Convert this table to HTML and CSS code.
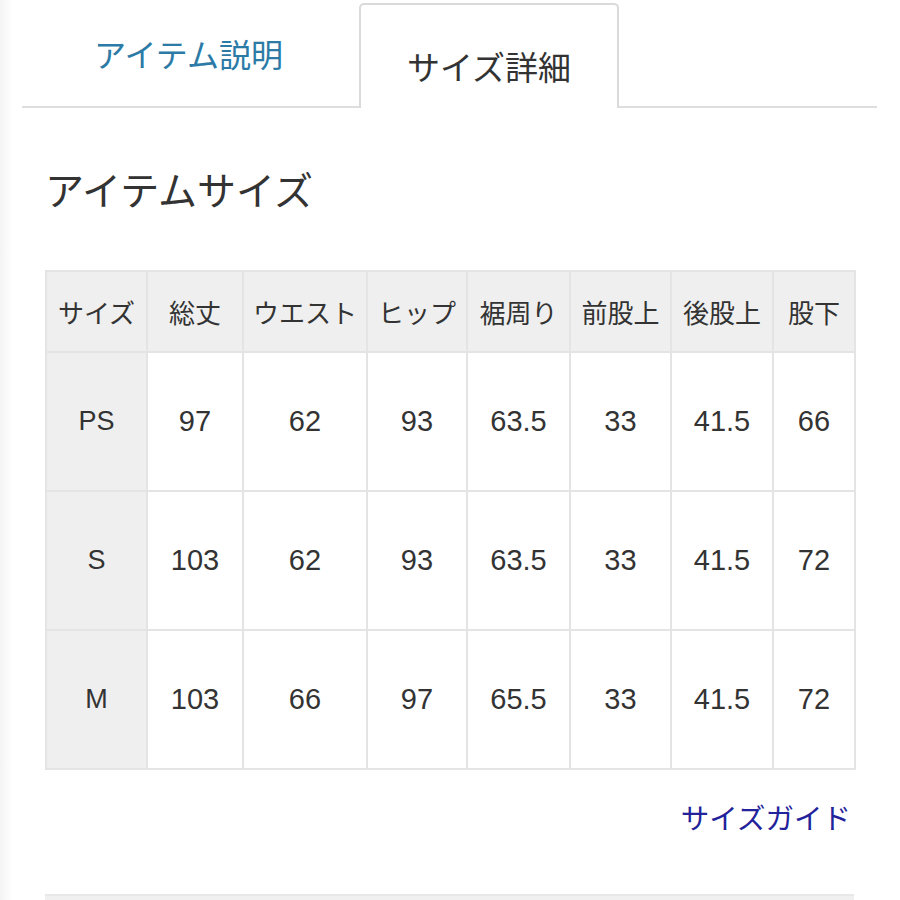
FILE: index.html
```html
<!DOCTYPE html>
<html lang="ja">
<head>
<meta charset="utf-8">
<link rel="stylesheet" href="styles.css">
</head>
<body>
<div class="page">
  <div class="tabs">
    <div class="tab">アイテム説明</div>
    <div class="tab active">サイズ詳細</div>
    <div class="tab rest"></div>
  </div>
  <div class="content">
    <h2 class="title">アイテムサイズ</h2>
    <table class="sizes">
      <colgroup>
        <col style="width:101px"><col style="width:96px"><col style="width:124px"><col style="width:100px"><col style="width:103px"><col style="width:101px"><col style="width:102px"><col style="width:82px">
      </colgroup>
      <thead>
        <tr><th>サイズ</th><th>総丈</th><th>ウエスト</th><th>ヒップ</th><th>裾周り</th><th>前股上</th><th>後股上</th><th>股下</th></tr>
      </thead>
      <tbody>
        <tr><th>PS</th><td>97</td><td>62</td><td>93</td><td>63.5</td><td>33</td><td>41.5</td><td>66</td></tr>
        <tr><th>S</th><td>103</td><td>62</td><td>93</td><td>63.5</td><td>33</td><td>41.5</td><td>72</td></tr>
        <tr><th>M</th><td>103</td><td>66</td><td>97</td><td>65.5</td><td>33</td><td>41.5</td><td>72</td></tr>
      </tbody>
    </table>
    <div class="guide"><a class="guide-link" href="#">サイズガイド</a></div>
    <div class="bottom-box"></div>
  </div>
</div>
</body>
</html>
```

FILE: styles.css
```css
html, body {
  margin: 0;
  padding: 0;
  background: #ffffff;
}
body {
  font-family: "Liberation Sans", "Noto Sans CJK JP", sans-serif;
  color: #333333;
  width: 900px;
  height: 900px;
  overflow: hidden;
  background: linear-gradient(to right, #f4f4f4 0, #fbfbfb 8px, #ffffff 14px);
}
.page {
  padding: 3px 23px 0 22px;
}
.tabs {
  display: flex;
  height: 105px;
}
.tab {
  box-sizing: border-box;
  display: flex;
  align-items: center;
  justify-content: center;
  width: 337px;
  border-bottom: 2px solid #dedede;
  font-size: 32px;
  color: #2c7ba6;
  padding-bottom: 4px;
  padding-right: 4px;
}
.tab.active {
  width: 260px;
  border: 2px solid #dadada;
  border-bottom: none;
  border-radius: 5px 5px 0 0;
  color: #333333;
  padding-top: 18px;
  padding-bottom: 0;
  padding-right: 0;
  font-size: 33px;
}
.tab.rest {
  flex: 1;
  width: auto;
}
.content {
  padding: 0 23px;
}
.title {
  margin: 61px 0 0 0;
  font-size: 39px;
  font-weight: normal;
  line-height: 46px;
  color: #333333;
}
.sizes {
  margin-top: 55px;
  border-collapse: collapse;
  table-layout: fixed;
  width: 809px;
  border: 2px solid #dcdcdc;
}
.sizes th, .sizes td {
  border: 2px solid #e4e4e4;
  text-align: center;
  vertical-align: middle;
  padding: 0;
  font-weight: normal;
  color: #333333;
}
.sizes thead th {
  background: #efefef;
  height: 79px;
  font-size: 26px;
}
.sizes tbody th {
  background: #efefef;
  font-size: 27px;
}
.sizes tbody td {
  font-size: 29px;
  background: #ffffff;
}
.sizes tbody tr {
  height: 139px;
}
.guide {
  text-align: right;
  padding-right: 3px;
  margin-top: 26px;
}
.guide-link {
  font-size: 28.5px;
  color: #22229a;
  text-decoration: none;
}
.bottom-box {
  margin-top: 57px;
  height: 40px;
  background: #f0f0f0;
  border-top: 2px solid #e8e8e8;
}
```
